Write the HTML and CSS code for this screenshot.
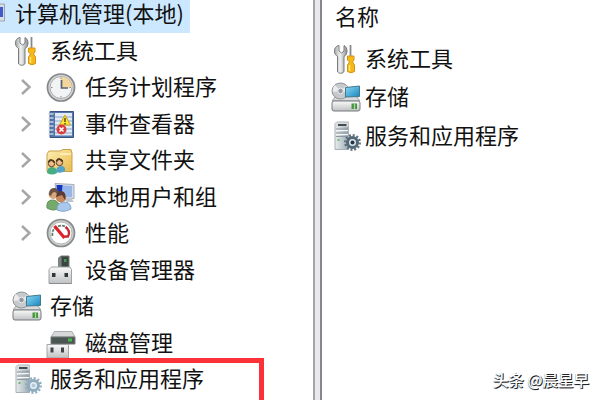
FILE: index.html
```html
<!DOCTYPE html>
<html lang="zh-CN">
<head>
<meta charset="utf-8">
<title>计算机管理</title>
<link rel="stylesheet" href="styles.css">
</head>
<body>
<svg class="defs" aria-hidden="true">
  <defs>
    <linearGradient id="metal" x2="0" y2="1"><stop stop-color="#fafafa"/><stop offset="1" stop-color="#bfc1c2"/></linearGradient>
    <linearGradient id="steel"><stop stop-color="#a0a3a4"/><stop offset=".45" stop-color="#f2f2f2"/><stop offset="1" stop-color="#8b8f91"/></linearGradient>
    <linearGradient id="blue" x2="1" y2="1"><stop stop-color="#8ad9f4"/><stop offset="1" stop-color="#1687c0"/></linearGradient>
    <linearGradient id="gold" x2="1" y2="1"><stop stop-color="#fff0b4"/><stop offset="1" stop-color="#e9b94c"/></linearGradient>
    <linearGradient id="tower"><stop stop-color="#e7ecee"/><stop offset="1" stop-color="#9dabb2"/></linearGradient>
    <symbol id="tools" viewBox="0 0 30 30">
      <path d="M8 1.500C5 2 3 4.500 3.500 8c.3 2 1.500 3.500 3 4.500V27c0 3 6.500 3 6.500 0V12.500c2-1 3-3 3-5.500 0-2.500-1-4.500-3-5.500v5.500L10.500 9 8 7z" fill="url(#steel)" stroke="#777b7e"/>
      <path d="M19.500 1v12" stroke="#84898c" stroke-width="1.800"/>
      <path d="M16.500 12h6.500v4l-1.500 2 2 3v6.500q-3.500 2.500-7 0V21l2-3-2-2z" fill="#f6b817" stroke="#d49215"/>
      <path d="M18.500 21v6" stroke="#ffe57e" stroke-width="1.500"/>
    </symbol>
    <symbol id="clock" viewBox="0 0 30 30">
      <circle cx="15" cy="15.500" r="13.500" fill="#d3d5d6" stroke="#858789" stroke-width="1.700"/>
      <circle cx="15" cy="15.500" r="11" fill="#f2f3f4" stroke="#aaa"/>
      <path d="M15 15.500V4.700a10.800 10.800 0 0 1 10.800 10.800z" fill="#f5d69a"/>
      <path d="M15 5.500v1.500M15 24v1.500M5 15.500h1.500M23.500 15.500H25" stroke="#888"/>
      <path d="M15.500 8v8H22" fill="none" stroke="#556373" stroke-width="1.700"/>
    </symbol>
    <symbol id="log" viewBox="0 0 30 30">
      <path d="M4 2.500h23.500v26H4z" fill="#5376ad" stroke="#375583"/>
      <path d="M9 4h17v22.500H9z" fill="#e2eaf4"/>
      <path d="M9 8h17M9 12h17M9 16h17M9 20h17M9 24h17" stroke="#8ba5cc"/>
      <path d="M2.500 5h5M2.500 9h5M2.500 13h5M2.500 17h5M2.500 21h5M2.500 25h5" stroke="#c3d1e1" stroke-width="1.500"/>
      <path d="m19 6 5.500 10h-11z" fill="#ffe334" stroke="#cda51c"/>
      <path d="M19 9v4m0 1v1.500" stroke="#493f16" stroke-width="1.400"/>
      <circle cx="15.500" cy="20.500" r="5" fill="#da3d3e"/>
      <path d="m13.500 18.500 4 4m0-4-4 4" stroke="#fff" stroke-width="1.600"/>
    </symbol>
    <symbol id="share" viewBox="0 0 30 30">
      <path d="M1 9 3 6h11l3-1.500h8L26 8v18.500H1z" fill="url(#gold)" stroke="#c9a04a"/>
      <path d="M14 9h11" stroke="#fff4c8" stroke-width="1.500"/>
      <path d="M1 28q0-6 5-6t5 6q-5 3-10 0" fill="#45ad7f"/>
      <path d="M10 27q0-6 5-6t4 5q-4 3-9 1" fill="#52a3ca"/>
      <circle cx="5.500" cy="18.500" r="3.200" fill="#efbd8c" stroke="#59402b"/>
      <circle cx="13.500" cy="17.500" r="3.200" fill="#efbd8c" stroke="#59402b"/>
      <path d="M2.500 17q3-4 6 .5M10.500 16q3-4 6 .5" fill="none" stroke="#50371f" stroke-width="2"/>
    </symbol>
    <symbol id="users" viewBox="0 0 30 30">
      <path d="m9 1.500 19 1v14L11 18z" fill="#d5dae6" stroke="#a4adba"/>
      <path d="m10.500 3 15.500 1v11l-14 1z" fill="#96b5e8"/>
      <path d="M10.500 3h6l-1 11h-4z" fill="#1334bd"/>
      <path d="M17 16h8l3 4h-7z" fill="#bdc3cd"/>
      <path d="M1 26q-1-8 5.500-8t7 8q-6 4-12.500 0" fill="#75aa6c" stroke="#609255"/>
      <circle cx="7.500" cy="12" r="5" fill="#d9a77c"/>
      <path d="M3 13q0-8 6-7 5 1 3 7l-3-3q-3 0-4 4z" fill="#685346"/>
      <path d="M11 28q0-8 7-8t7 7q-7 4-14 1" fill="#a9c8eb" stroke="#7da6cf"/>
      <circle cx="15" cy="15.500" r="5" fill="#c7875d"/>
      <path d="M10 15q1-7 6-6 5 2 3 9l-3-5z" fill="#5b3b35"/>
    </symbol>
    <symbol id="gauge" viewBox="0 0 30 30">
      <circle cx="15" cy="15" r="13.500" fill="#cccfcf" stroke="#888a8a" stroke-width="1.700"/>
      <circle cx="15" cy="15" r="11" fill="#fff" stroke="#b4b7b7"/>
      <path d="M6.500 18q-1-7 5-9.500M12 8.300q6-2 9 2" fill="none" stroke="#5f7d70" stroke-width="1.800" stroke-dasharray="3 1"/>
      <path d="M19.500 9q5.500 4 2.500 9.500h-3.500" fill="none" stroke="#c92a32" stroke-width="2.400"/>
      <path d="m8.500 8 10 12" stroke="#dc222b" stroke-width="3.200"/>
    </symbol>
    <symbol id="device" viewBox="0 0 30 30">
      <path d="M12.500 3 15 1h8v13H12.500z" fill="#3b4641" stroke="#777d7b"/>
      <path d="M12.500 3v11h3V1.500z" fill="#7e8683"/>
      <path d="M18 4h2.500v3H18z" fill="#4a9557"/>
      <path d="M3 14.500 5.500 12H24l1.500 2.500v14H3z" fill="url(#metal)" stroke="#a0a3a5"/>
      <path d="M6 18h3.500v4H6zM18.500 18H22v4h-3.500z" fill="#333739"/>
      <path d="M3 28.500h22.500" stroke="#888c8e"/>
    </symbol>
    <symbol id="storage" viewBox="0 0 30 30">
      <path d="m1 19 4-5h20l4 5z" fill="#d9dadb" stroke="#979b9d"/>
      <ellipse cx="9.500" cy="9" rx="8.500" ry="8" fill="#c6cacc" stroke="#8d9295"/>
      <path d="M9.500 9 4 3q-3 3-2 7zM9.500 9l6-5.500q2.500 3 2 7z" fill="#ececee"/>
      <circle cx="9.500" cy="9" r="2.800" fill="#929aa0" stroke="#eee"/>
      <path d="M14.500 5.500 28.500 4v10.500l-14 .5z" fill="url(#blue)" stroke="#43798d"/>
      <rect x="1" y="19" width="28" height="10" rx="2" fill="url(#metal)" stroke="#777b7d"/>
      <path d="M20.500 21.500H26V27h-5.500z" fill="#518e4d"/>
      <path d="M23.500 21.500V27" stroke="#8eec7e" stroke-width="1.300"/>
    </symbol>
    <symbol id="disk" viewBox="0 0 30 30">
      <path d="m5 9 3.500-5.500H26L29 9z" fill="#d6d8d9" stroke="#aaadad"/>
      <path d="M5 9h24v7H5z" fill="#4b5552" stroke="#747a77"/>
      <path d="M22 10.500h4v3h-4z" fill="#47b74c"/>
      <path d="M1 16.500h21.500V30H1z" fill="url(#metal)" stroke="#a4a6a7"/>
      <path d="M4.500 19.500h3v5h-3zM15 19.500h3v5h-3z" fill="#414548"/>
    </symbol>
    <symbol id="server" viewBox="0 0 30 30">
      <path d="M4 2.500 6 1h11.500v27.500H4z" fill="url(#tower)" stroke="#a7b0b4"/>
      <path d="M4.500 1.500h13v4h-13z" fill="#d9dddf"/>
      <path d="M7 4h8.500" stroke="#343b3f" stroke-width="1.800"/>
      <path d="M5 8h12M5 12h12M5 15.500h12" stroke="#8d989f"/>
      <path d="M5 9.500h12M5 13.500h12" stroke="#f4f6f7"/>
      <path d="M6.500 19h2" stroke="#72b968" stroke-width="2"/>
      <circle cx="21.500" cy="21.500" r="7.200" fill="none" stroke="var(--teeth)" stroke-width="2.500" stroke-dasharray="2 1.770"/>
      <circle cx="21.500" cy="21.500" r="5" fill="var(--rim)" stroke="var(--gear)" stroke-width="3"/>
      <circle cx="21.500" cy="21.500" r="2" fill="var(--hub)"/>
    </symbol>
    <symbol id="chevron" viewBox="0 0 12 18"><path d="m2 2 7.500 7L2 16" fill="none" stroke="#a6a6a6" stroke-width="2.500"/></symbol>
  </defs>
</svg>
<div class="window">
  <nav class="tree">
    <div class="row root"><svg class="computer" viewBox="0 0 6 20"><path d="M0 1h4.500v17H0" fill="#dadde6" stroke="#9ca2ae"/><path d="M0 4h3v10H0z" fill="#405acb"/></svg><span class="label">计算机管理(本地)</span></div>
    <div class="row top"><svg class="icon"><use href="#tools"/></svg><span class="label">系统工具</span></div>
    <div class="row child"><svg class="chevron"><use href="#chevron"/></svg><svg class="icon"><use href="#clock"/></svg><span class="label">任务计划程序</span></div>
    <div class="row child"><svg class="chevron"><use href="#chevron"/></svg><svg class="icon"><use href="#log"/></svg><span class="label">事件查看器</span></div>
    <div class="row child"><svg class="chevron"><use href="#chevron"/></svg><svg class="icon"><use href="#share"/></svg><span class="label">共享文件夹</span></div>
    <div class="row child"><svg class="chevron"><use href="#chevron"/></svg><svg class="icon"><use href="#users"/></svg><span class="label">本地用户和组</span></div>
    <div class="row child"><svg class="chevron"><use href="#chevron"/></svg><svg class="icon"><use href="#gauge"/></svg><span class="label">性能</span></div>
    <div class="row child"><span class="chevron"></span><svg class="icon"><use href="#device"/></svg><span class="label">设备管理器</span></div>
    <div class="row top"><svg class="icon"><use href="#storage"/></svg><span class="label">存储</span></div>
    <div class="row child"><span class="chevron"></span><svg class="icon"><use href="#disk"/></svg><span class="label">磁盘管理</span></div>
    <div class="row top"><svg class="icon"><use href="#server"/></svg><span class="label">服务和应用程序</span></div>
  </nav>
  <div class="splitter"></div>
  <main class="list">
    <div class="heading">名称</div>
    <div class="item"><svg class="icon"><use href="#tools"/></svg><span class="label">系统工具</span></div>
    <div class="item"><svg class="icon"><use href="#storage"/></svg><span class="label">存储</span></div>
    <div class="item dark-gear"><svg class="icon"><use href="#server"/></svg><span class="label">服务和应用程序</span></div>
  </main>
  <div class="highlight"></div>
  <div class="credit">头条 @晨星早</div>
</div>
</body>
</html>
```
FILE: styles.css
```css
* { box-sizing: border-box; }
body {
  margin: 0;
  background: #fff;
  color: #111;
  font-family: "Noto Sans CJK SC", sans-serif;
  font-size: 22px;
}
svg { display: block; flex: none; }
.defs { position: absolute; width: 0; height: 0; }
.window {
  --teeth: #92adbf;
  --gear: #8facbf;
  --rim: #e5eef4;
  --hub: #b4c9d7;
  position: relative;
  display: flex;
  width: 600px;
  height: 400px;
  overflow: hidden;
}
.tree { flex: none; width: 313px; }
.row { display: flex; align-items: center; height: 36.5px; white-space: nowrap; }
.label { padding-bottom: 4px; line-height: 28px; }
.root { width: 190px; height: 32.5px; padding-bottom: 4px; background: #cce8ff; }
.computer { width: 6px; height: 20px; margin: 0 9px 3px 0; }
.top { padding-left: 12px; }
.top .label { margin-left: 8px; }
.child { padding-left: 20px; }
.child .label { margin-left: 9px; }
.icon { width: 30px; height: 30px; }
.chevron { flex: none; width: 12px; height: 18px; margin-right: 14px; }
.splitter {
  flex: none;
  width: 9px;
  background: #e9e9ec;
  border-right: 2px solid #85878d;
  border-left: 2px solid #a2a4a9;
}
.list { flex: 1; padding-left: 9px; }
.heading { height: 39.5px; padding-left: 4px; line-height: 31px; }
.item { display: flex; align-items: center; height: 38.5px; white-space: nowrap; }
.item .label { margin-left: 4px; }
.dark-gear { --teeth: #60717e; --gear: #536978; --rim: #dce6ec; --hub: #26343e; }
.highlight {
  position: absolute;
  top: 358px;
  left: -6px;
  width: 270px;
  height: 60px;
  border: 5px solid #fb3338;
}
.credit {
  position: absolute;
  top: 367px;
  left: 493px;
  color: #fff;
  font-size: 15.500px;
  font-weight: 500;
  line-height: 24px;
  text-shadow: 1px 1px 0 #222, 0 1px 1px #555;
  white-space: nowrap;
}
```
